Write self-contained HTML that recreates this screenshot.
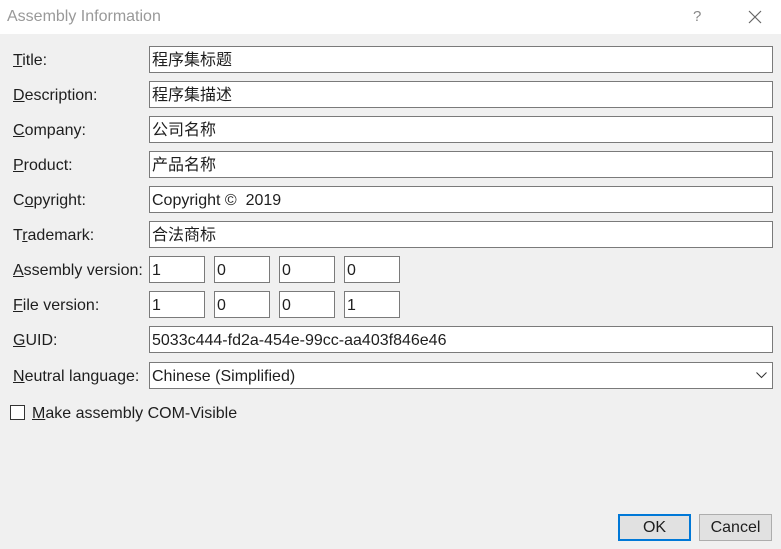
<!DOCTYPE html><html><head><style>
body{margin:0;width:781px;height:549px;background:#f0f0f0;font-family:"Liberation Sans","Noto Sans CJK SC",sans-serif;font-size:16px;color:#1e1e1e;position:relative;overflow:hidden}
.tb{position:absolute;left:0;top:0;width:781px;height:34px;background:#fff}
.tt{position:absolute;left:7px;top:8px;color:#999;font-size:16px}
.lb{position:absolute;left:13px}
.in{position:absolute;left:149px;height:25px;border:1px solid #7a7a7a;background:#fff;line-height:28px;padding-left:2px;width:620px}
.v{position:absolute;width:52px;height:25px;border:1px solid #7a7a7a;background:#fff;line-height:28px;padding-left:2px}
u{text-decoration:underline}
.btn{position:absolute;top:514px;height:27px;width:73px;box-sizing:border-box;border:1px solid #adadad;background:#e1e1e1;text-align:center;line-height:26px}
</style></head><body>
<div class="tb"><div class="tt">Assembly Information</div>
<div style="position:absolute;left:693px;top:8px;color:#888;font-size:15px">?</div>
<svg style="position:absolute;left:748px;top:10px" width="14" height="14"><path d="M1 1L13 13M13 1L1 13" stroke="#666" stroke-width="1.2"/></svg></div>

<div class="lb" style="top:52px"><u>T</u>itle:</div><div class="in" style="top:46px">程序集标题</div>
<div class="lb" style="top:87px"><u>D</u>escription:</div><div class="in" style="top:81px">程序集描述</div>
<div class="lb" style="top:122px"><u>C</u>ompany:</div><div class="in" style="top:116px">公司名称</div>
<div class="lb" style="top:157px"><u>P</u>roduct:</div><div class="in" style="top:151px">产品名称</div>
<div class="lb" style="top:192px">C<u>o</u>pyright:</div><div class="in" style="top:186px">Copyright ©&nbsp; 2019</div>
<div class="lb" style="top:227px">T<u>r</u>ademark:</div><div class="in" style="top:221px">合法商标</div>
<div class="lb" style="top:262px"><u>A</u>ssembly version:</div>
<div class="v" style="left:149px;top:256px">1</div><div class="v" style="left:214px;top:256px">0</div><div class="v" style="left:279px;top:256px">0</div><div class="v" style="left:344px;top:256px">0</div>
<div class="lb" style="top:297px"><u>F</u>ile version:</div>
<div class="v" style="left:149px;top:291px">1</div><div class="v" style="left:214px;top:291px">0</div><div class="v" style="left:279px;top:291px">0</div><div class="v" style="left:344px;top:291px">1</div>
<div class="lb" style="top:332px"><u>G</u>UID:</div><div class="in" style="top:326px">5033c444-fd2a-454e-99cc-aa403f846e46</div>
<div class="lb" style="top:368px"><u>N</u>eutral language:</div><div class="in" style="top:362px">Chinese (Simplified)</div>
<svg style="position:absolute;left:756px;top:372px" width="11" height="7"><path d="M0.5 0.5L5.5 5.5L10.5 0.5" stroke="#333" fill="none"/></svg>
<div style="position:absolute;left:10px;top:405px;width:13px;height:13px;border:1px solid #333;background:#fff"></div>
<div style="position:absolute;left:32px;top:405px"><u>M</u>ake assembly COM-Visible</div>
<div class="btn" style="left:618px;border:2px solid #0078d7;line-height:24px">OK</div>
<div class="btn" style="left:699px">Cancel</div>
</body></html>
